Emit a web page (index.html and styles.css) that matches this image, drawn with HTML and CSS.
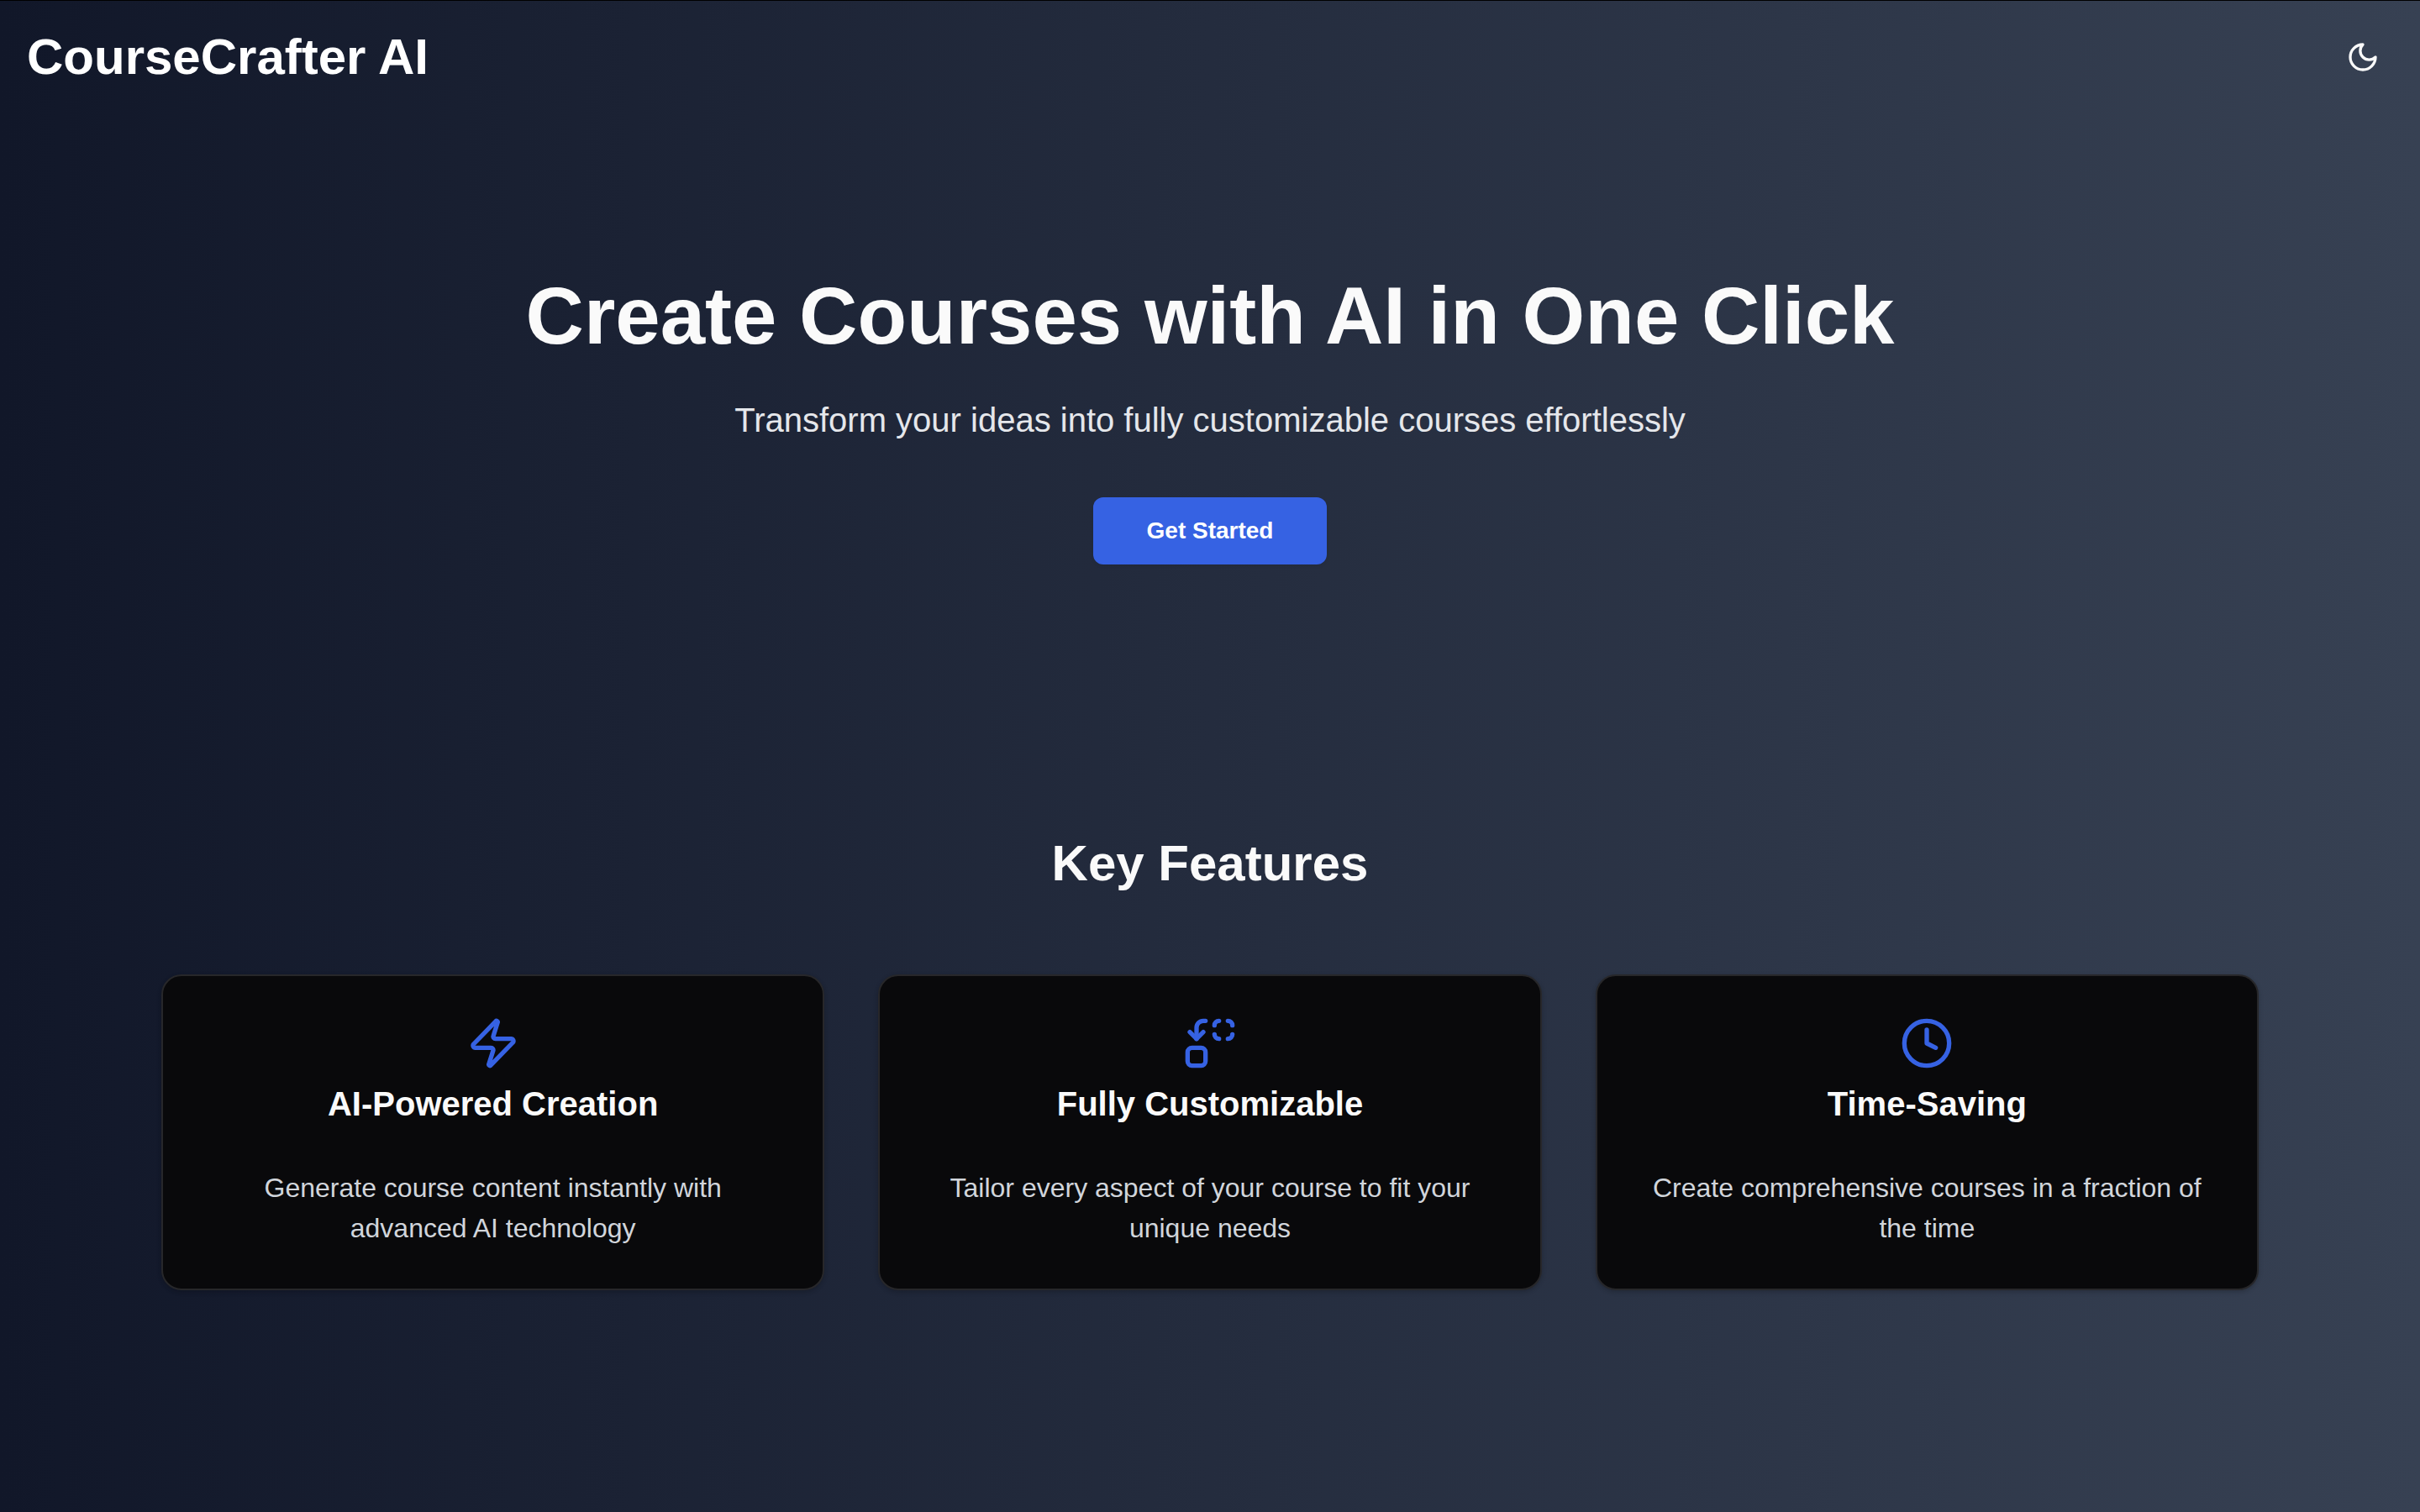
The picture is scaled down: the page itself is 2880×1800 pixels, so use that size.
FILE: index.html
```html
<!DOCTYPE html>
<html lang="en">
<head>
<meta charset="utf-8">
<meta name="viewport" content="width=device-width, initial-scale=1">
<title>CourseCrafter AI</title>
<link rel="stylesheet" href="styles.css">
</head>
<body>
<header class="header">
  <a class="logo" href="#">CourseCrafter AI</a>
  <button class="theme-toggle" type="button" aria-label="Toggle theme">
    <svg class="icon icon-small" viewBox="0 0 24 24" aria-hidden="true"><path d="M12 3a6 6 0 0 0 9 9 9 9 0 1 1-9-9Z"/></svg>
  </button>
</header>
<main>
  <section class="hero">
    <h1 class="hero-title">Create Courses with AI in One Click</h1>
    <p class="hero-text">Transform your ideas into fully customizable courses effortlessly</p>
    <button class="cta" type="button">Get Started</button>
  </section>
  <section class="features">
    <h2 class="features-title">Key Features</h2>
    <div class="cards">
      <article class="card">
        <div class="card-head">
          <svg class="icon icon-large" viewBox="0 0 24 24" aria-hidden="true"><path d="M4 14a1 1 0 0 1-.78-1.63l9.9-10.2a.5.5 0 0 1 .86.46l-1.92 6.02A1 1 0 0 0 13 10h7a1 1 0 0 1 .78 1.63l-9.9 10.2a.5.5 0 0 1-.86-.46l1.92-6.02A1 1 0 0 0 11 14z"/></svg>
          <h3 class="card-title">AI-Powered Creation</h3>
        </div>
        <p class="card-text">Generate course content instantly with advanced AI technology</p>
      </article>
      <article class="card">
        <div class="card-head">
          <svg class="icon icon-large" viewBox="0 0 24 24" aria-hidden="true"><path d="M14 4a2 2 0 0 1 2-2"/><path d="M16 10a2 2 0 0 1-2-2"/><path d="M20 2a2 2 0 0 1 2 2"/><path d="M22 8a2 2 0 0 1-2 2"/><path d="m3 7 3 3 3-3"/><path d="M6 10V5a3 3 0 0 1 3-3h1"/><rect x="2" y="14" width="8" height="8" rx="2"/></svg>
          <h3 class="card-title">Fully Customizable</h3>
        </div>
        <p class="card-text">Tailor every aspect of your course to fit your unique needs</p>
      </article>
      <article class="card">
        <div class="card-head">
          <svg class="icon icon-large" viewBox="0 0 24 24" aria-hidden="true"><circle cx="12" cy="12" r="10"/><path d="M12 6v6l4 2"/></svg>
          <h3 class="card-title">Time-Saving</h3>
        </div>
        <p class="card-text">Create comprehensive courses in a fraction of the time</p>
      </article>
    </div>
  </section>
</main>
</body>
</html>
```
FILE: styles.css
```css
*,
*::before,
*::after {
  box-sizing: border-box;
}

body,
h1,
h2,
h3,
p {
  margin: 0;
}

body {
  min-height: 100vh;
  font-family: "Liberation Sans", Arial, Helvetica, sans-serif;
  color: #fafafa;
  background: linear-gradient(to right, #111729, #374153);
  box-shadow: inset 0 1px 0 #000;
}

button {
  border: 0;
  font-family: inherit;
  cursor: pointer;
}

.icon {
  display: block;
  fill: none;
  stroke: currentColor;
  stroke-width: 2;
  stroke-linecap: round;
  stroke-linejoin: round;
}

.icon-small {
  width: 40px;
  height: 40px;
}

.icon-large {
  width: 64px;
  height: 64px;
  color: #3662e3;
}

.header {
  display: flex;
  align-items: center;
  justify-content: space-between;
  padding: 32px;
}

.logo {
  font-size: 60px;
  line-height: 72px;
  font-weight: 700;
  color: #fff;
  text-decoration: none;
}

.theme-toggle {
  display: grid;
  place-items: center;
  width: 72px;
  height: 72px;
  padding: 0;
  color: #fafafa;
  background: transparent;
}

.hero {
  display: flex;
  flex-direction: column;
  align-items: center;
  padding: 192px 64px;
  text-align: center;
}

.hero-title {
  margin-bottom: 48px;
  font-size: 96px;
  line-height: 96px;
  font-weight: 700;
}

.hero-text {
  margin-bottom: 64px;
  font-size: 40px;
  line-height: 56px;
  color: #e5e7eb;
}

.cta {
  padding: 20px 64px;
  border-radius: 12px;
  font-size: 28px;
  line-height: 40px;
  font-weight: 700;
  color: #fff;
  background: #3662e3;
  box-shadow: 0 2px 4px rgba(0, 0, 0, 0.05);
}

.features {
  max-width: 2624px;
  margin: 0 auto;
  padding: 128px 64px;
}

.features-title {
  margin-bottom: 96px;
  font-size: 60px;
  line-height: 72px;
  font-weight: 700;
  text-align: center;
}

.cards {
  display: grid;
  grid-template-columns: repeat(3, 1fr);
  gap: 64px;
}

.card {
  display: flex;
  flex-direction: column;
  gap: 48px;
  padding: 48px;
  border: 2px solid #27272a;
  border-radius: 24px;
  text-align: center;
  background: #09090b;
  box-shadow: 0 2px 6px rgba(0, 0, 0, 0.1), 0 2px 4px rgba(0, 0, 0, 0.1);
}

.card-head {
  display: flex;
  flex-direction: column;
  align-items: center;
  gap: 12px;
}

.card-title {
  font-size: 40px;
  line-height: 56px;
  font-weight: 700;
}

.card-text {
  font-size: 32px;
  line-height: 48px;
  color: #d1d5db;
}
```
